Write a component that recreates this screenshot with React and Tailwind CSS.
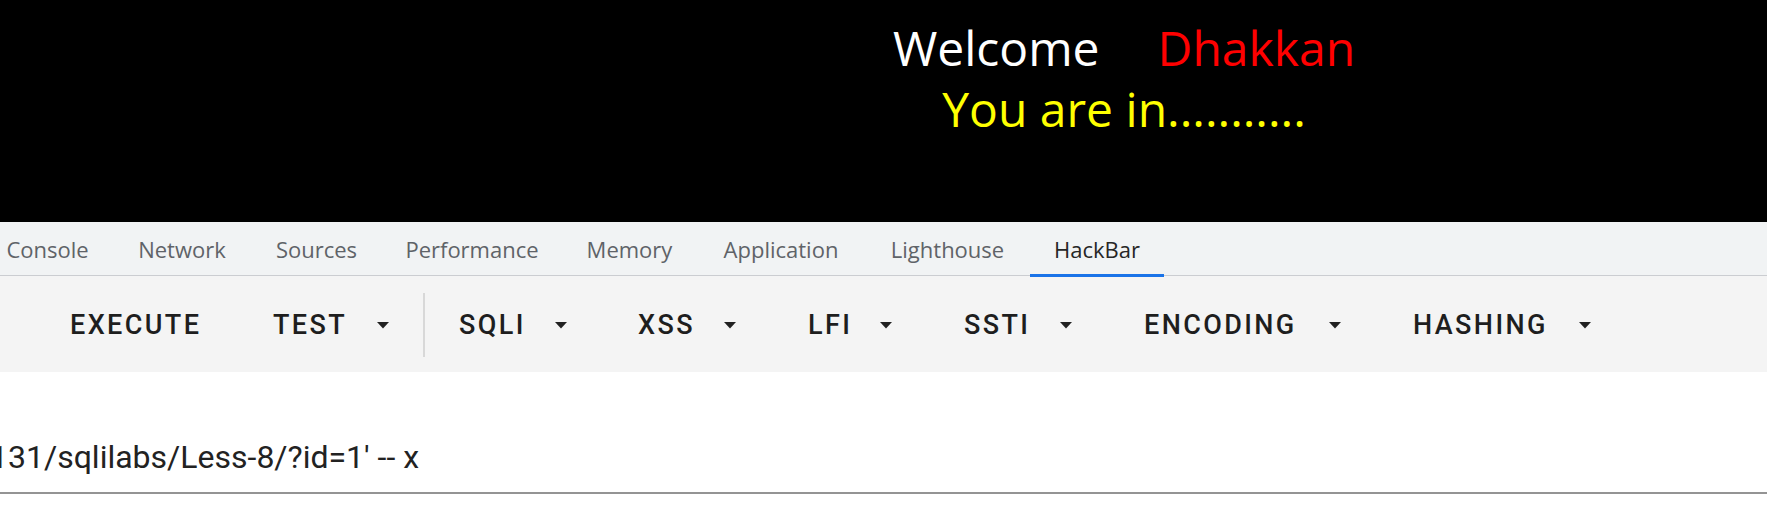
import React from "react";

const tabs = [
  { label: "Console", w: "w-[131px]" },
  { label: "Network", w: "w-[138px]" },
  { label: "Sources", w: "w-[131px]" },
  { label: "Performance", w: "w-[180px]" },
  { label: "Memory", w: "w-[135px]" },
  { label: "Application", w: "w-[168px]" },
  { label: "Lighthouse", w: "w-[165px]" },
  { label: "HackBar", w: "w-[134px]", active: true },
];

const menus = [
  { label: "SQLI", w: "w-[108px]", ml: "ml-[34px]" },
  { label: "XSS", w: "w-[98px]", ml: "ml-[71px]" },
  { label: "LFI", w: "w-[84px]", ml: "ml-[72px]" },
  { label: "SSTI", w: "w-[108px]", ml: "ml-[72px]" },
  { label: "ENCODING", w: "w-[197px]", ml: "ml-[72px]" },
  { label: "HASHING", w: "w-[178px]", ml: "ml-[72px]" },
];

function Caret() {
  return (
    <svg width="12" height="7" viewBox="0 0 12 7" className="shrink-0">
      <polygon points="0,0 12,0 6,6.5" fill="#212121" />
    </svg>
  );
}

export default function App() {
  return (
    <div className="w-[1767px] h-[531px] overflow-hidden bg-white">
      {/* page */}
      <div className="h-[222px] bg-black pl-[481px] pt-[17px] font-['Open_Sans',sans-serif] text-[48px] leading-[61px] flex flex-col items-center">
        <div className="text-white">
          Welcome<span className="ml-[58px] text-[#ff0000]">Dhakkan</span>
        </div>
        <div className="text-[#ffff00]">You are in...........</div>
      </div>

      {/* devtools tabs */}
      <div className="h-[54px] bg-[#f1f3f4] border-b border-[#cbcdd1] flex font-['Open_Sans',sans-serif] text-[22px]">
        <div className="flex -ml-[18px]">
          {tabs.map((t) => (
            <div
              key={t.label}
              className={`${t.w} relative flex items-center justify-center pt-[2px] ${
                t.active ? "text-[#262626]" : "text-[#5f6368]"
              }`}
            >
              {t.label}
              {t.active && (
                <span className="absolute left-0 right-0 -bottom-[2px] h-[3px] bg-[#1a73e8]" />
              )}
            </div>
          ))}
        </div>
      </div>

      {/* hackbar toolbar */}
      <div className="h-[96px] bg-[#f4f4f4] flex items-center pl-[70px] pt-[2px] font-['Roboto',sans-serif] font-medium text-[27px] tracking-[2.4px] text-[#1e1e1e]">
        <div className="w-[203px]">EXECUTE</div>
        <div className="w-[116px] flex items-center justify-between">
          <span>TEST</span>
          <Caret />
        </div>
        <div className="ml-[34px] w-[2px] h-[64px] bg-[#d8d8d8]" />
        {menus.map((m) => (
          <div key={m.label} className={`${m.ml} ${m.w} flex items-center justify-between`}>
            <span>{m.label}</span>
            <Caret />
          </div>
        ))}
      </div>

      {/* url field */}
      <div className="pt-[65px]">
        <div className="border-b-2 border-[#949494] pb-[15px] overflow-hidden">
          <div className="-ml-[10px] whitespace-pre font-['Roboto',sans-serif] text-[32px] leading-[40px] text-[#222222]">
            131/sqlilabs/Less-8/?id=1' -- x
          </div>
        </div>
      </div>
    </div>
  );
}
